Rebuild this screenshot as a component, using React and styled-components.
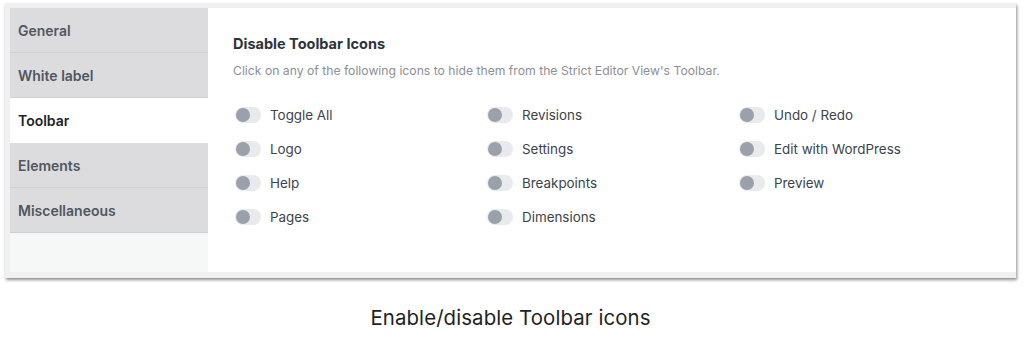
import React from 'react'
import styled, { createGlobalStyle } from 'styled-components'

const GlobalStyle = createGlobalStyle`
  html, body {
    margin: 0;
    padding: 0;
    background: #ffffff;
    font-family: Inter, "Noto Sans", sans-serif;
  }
`

const Page = styled.div`
  width: 1024px;
  height: 339px;
  padding: 3px 8px 0 5px;
  box-sizing: border-box;
`

const Frame = styled.div`
  display: flex;
  height: 275px;
  padding: 5px 4px 6px 5px;
  box-sizing: border-box;
  background: #f0f0f1;
  box-shadow: 1px 2px 3px rgba(0, 0, 0, 0.45);
`

const Sidebar = styled.ul`
  list-style: none;
  margin: 0;
  padding: 0;
  width: 198px;
  background: #f6f7f7;
  flex-shrink: 0;
`

const NavItem = styled.li`
  height: 45px;
  display: flex;
  align-items: center;
  padding-left: 8px;
  font-size: 14px;
  font-weight: 600;
  color: ${p => (p.active ? '#1d2327' : '#50575e')};
  background: ${p => (p.active ? '#ffffff' : '#dcdcde')};
  border-bottom: 1px solid ${p => (p.active ? '#ffffff' : '#d0d0d3')};
  box-sizing: border-box;
`

const Content = styled.div`
  flex: 1;
  background: #ffffff;
  padding: 27px 25px 0 25px;
`

const Title = styled.h2`
  margin: 0;
  font-size: 14.5px;
  font-weight: 700;
  color: #2c3338;
  line-height: 18px;
`

const Description = styled.p`
  margin: 9px 0 0 0;
  font-size: 12.2px;
  color: #8c8f94;
  line-height: 18px;
`

const Grid = styled.div`
  display: grid;
  grid-template-columns: repeat(3, 252px);
  grid-auto-flow: column;
  grid-template-rows: repeat(4, 34px);
  margin-top: 26px;
  margin-left: 2px;
`

const Option = styled.label`
  display: flex;
  align-items: center;
  gap: 9px;
  font-size: 13.4px;
  color: #3c434a;
  height: 18px;
`

const Track = styled.span`
  position: relative;
  width: 26px;
  height: 16px;
  border-radius: 8px;
  background: #e9eaec;
  flex-shrink: 0;
`

const Knob = styled.span`
  position: absolute;
  left: 1px;
  top: 1px;
  width: 14px;
  height: 14px;
  border-radius: 50%;
  background: #9aa1ab;
`

const Caption = styled.div`
  text-align: center;
  margin-top: 27px;
  font-size: 20.4px;
  color: #1f1f1f;
  letter-spacing: 0.1px;
`

const columns = [
  ['Toggle All', 'Logo', 'Help', 'Pages'],
  ['Revisions', 'Settings', 'Breakpoints', 'Dimensions'],
  ['Undo / Redo', 'Edit with WordPress', 'Preview']
]

const navItems = ['General', 'White label', 'Toolbar', 'Elements', 'Miscellaneous']

const Toggle = ({ label }) => (
  <Option>
    <Track><Knob /></Track>
    {label}
  </Option>
)

const App = () => {
  return (
    <Page>
      <GlobalStyle />
      <Frame>
        <Sidebar>
          {navItems.map(item => (
            <NavItem key={item} active={item === 'Toolbar'}>{item}</NavItem>
          ))}
        </Sidebar>
        <Content>
          <Title>Disable Toolbar Icons</Title>
          <Description>
            Click on any of the following icons to hide them from the Strict Editor View's Toolbar.
          </Description>
          <Grid>
            {columns.map((col, i) => (
              <React.Fragment key={i}>
                {col.map(label => <Toggle key={label} label={label} />)}
                {col.length < 4 && <span />}
              </React.Fragment>
            ))}
          </Grid>
        </Content>
      </Frame>
      <Caption>Enable/disable Toolbar icons</Caption>
    </Page>
  )
}

export default App
